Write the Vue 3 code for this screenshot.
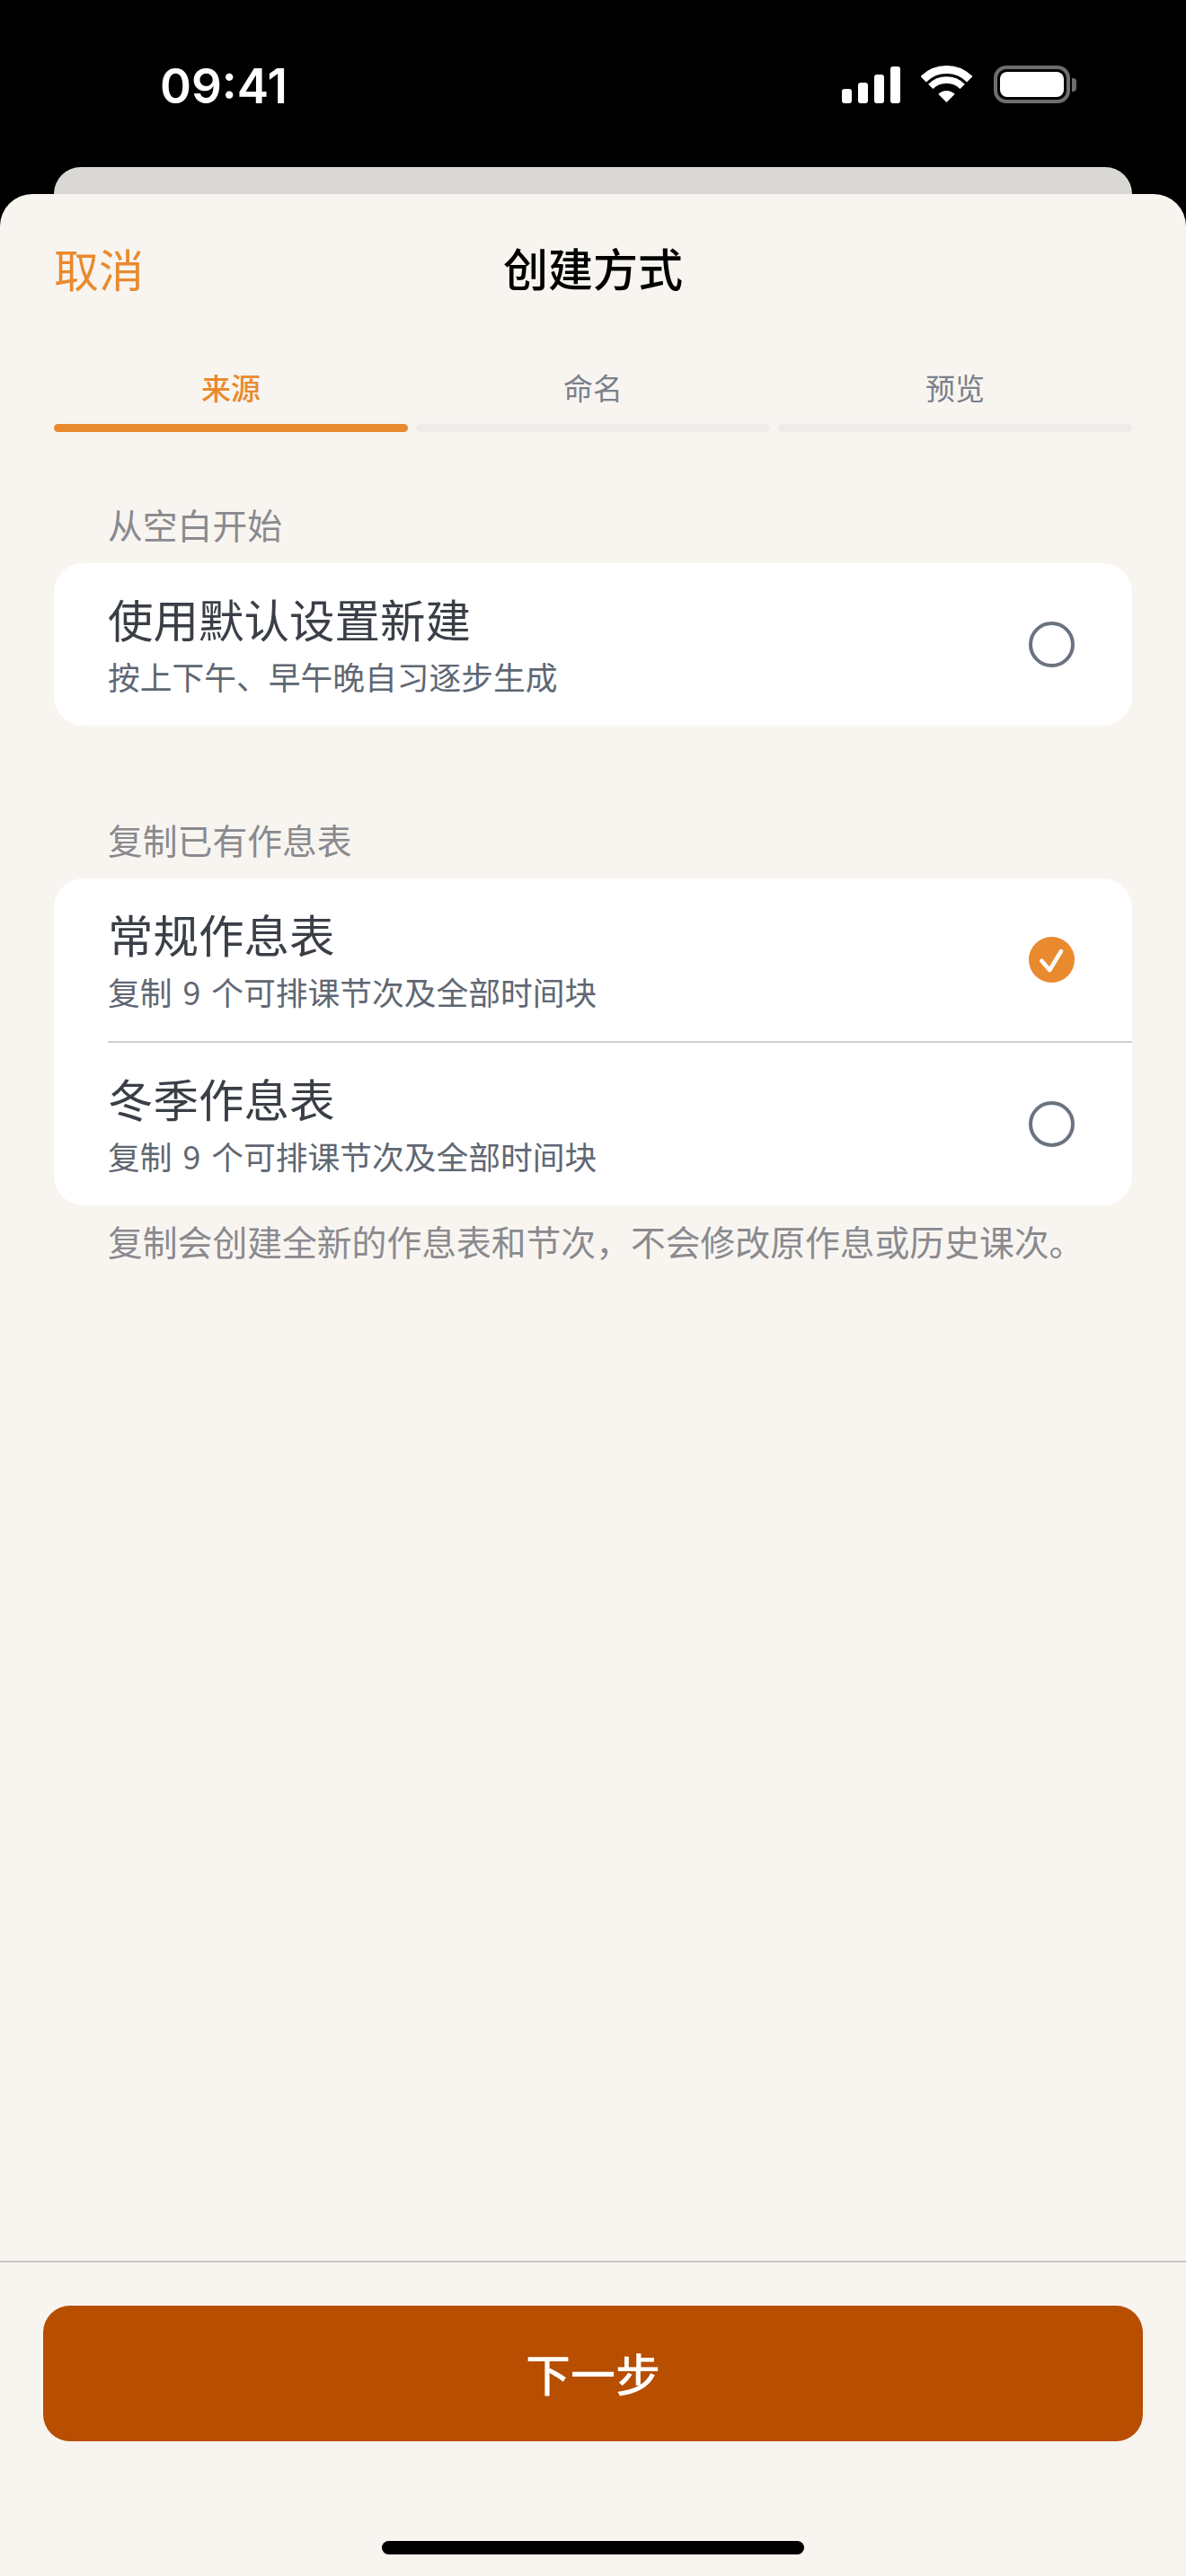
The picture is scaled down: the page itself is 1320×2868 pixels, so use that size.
<script setup>
const tabs = [
  { label: '来源', active: true },
  { label: '命名', active: false },
  { label: '预览', active: false }
]

const copies = [
  { title: '常规作息表', sub: '复制 9 个可排课节次及全部时间块', checked: true },
  { title: '冬季作息表', sub: '复制 9 个可排课节次及全部时间块', checked: false }
]
</script>

<template>
  <div class="phone" lang="zh-CN">
    <div class="status-bar">
      <span class="time">09:41</span>
      <div class="status-icons">
        <div class="signal">
          <i class="b1"></i><i class="b2"></i><i class="b3"></i><i class="b4"></i>
        </div>
        <svg class="wifi" width="57" height="42" viewBox="0 0 57 42" fill="none">
          <path d="M2.7 15.2A36.5 36.5 0 0 1 54.3 15.2" stroke="#fff" stroke-width="9" />
          <path d="M10.8 23.3A25 25 0 0 1 46.2 23.3" stroke="#fff" stroke-width="7.5" />
          <path d="M28.5 41L19.3 31.8A13 13 0 0 1 37.7 31.8Z" fill="#fff" />
        </svg>
        <div class="battery">
          <div class="battery-body"><div class="battery-fill"></div></div>
          <div class="battery-tip"></div>
        </div>
      </div>
    </div>

    <div class="back-card"></div>

    <div class="sheet">
      <div class="content">
        <div class="nav">
          <span class="cancel">取消</span>
          <span class="nav-title">创建方式</span>
          <span></span>
        </div>

        <div class="tabs">
          <div v-for="tab in tabs" :key="tab.label" class="tab" :class="{ active: tab.active }">
            <span class="tab-label">{{ tab.label }}</span>
            <div class="tab-bar"></div>
          </div>
        </div>

        <div class="section-label">从空白开始</div>
        <div class="card">
          <div class="row">
            <div class="row-text">
              <div class="row-title">使用默认设置新建</div>
              <div class="row-sub">按上下午、早午晚自习逐步生成</div>
            </div>
            <div class="radio"></div>
          </div>
        </div>

        <div class="section-label second">复制已有作息表</div>
        <div class="card">
          <div v-for="item in copies" :key="item.title" class="row divided">
            <div class="row-text">
              <div class="row-title">{{ item.title }}</div>
              <div class="row-sub">{{ item.sub }}</div>
            </div>
            <svg v-if="item.checked" class="check" width="51" height="51" viewBox="0 0 51 51" fill="none">
              <circle cx="25.5" cy="25.5" r="25.5" fill="#e98a2e" />
              <path d="M14.3 26.7L23.3 37L36 16" stroke="#fff" stroke-width="4.5" stroke-linecap="round" stroke-linejoin="round" />
            </svg>
            <div v-else class="radio"></div>
          </div>
        </div>
        <div class="note">复制会创建全新的作息表和节次，不会修改原作息或历史课次。</div>
      </div>

      <div class="footer">
        <button class="next-btn">下一步</button>
        <div class="home-indicator"></div>
      </div>
    </div>
  </div>
</template>

<style scoped>
.phone {
  width: 1320px;
  height: 2868px;
  background: #000;
  display: flex;
  flex-direction: column;
  overflow: hidden;
  font-family: "Noto Sans CJK SC", "Noto Sans", sans-serif;
}

.status-bar {
  height: 186px;
  flex-shrink: 0;
  display: flex;
  justify-content: space-between;
  padding: 64px 122px 0 178px;
  box-sizing: border-box;
}

.time {
  font-family: Inter, sans-serif;
  font-size: 53px;
  font-weight: 600;
  line-height: 64px;
  color: #fff;
}

.status-icons {
  display: flex;
  align-items: flex-start;
  padding-top: 9px;
}

.signal {
  display: flex;
  align-items: flex-end;
  gap: 7px;
  height: 42px;
  margin-right: 23px;
}

.signal i {
  display: block;
  width: 11px;
  border-radius: 3px;
  background: #fff;
}
.b1 { height: 16px; }
.b2 { height: 23px; }
.b3 { height: 32px; }
.b4 { height: 41px; }

.wifi {
  margin-right: 24px;
}

.battery {
  display: flex;
  align-items: center;
  gap: 2px;
}

.battery-body {
  width: 85px;
  height: 42px;
  box-sizing: border-box;
  border: 4px solid #6e6e6e;
  border-radius: 14px;
  padding: 3px;
}

.battery-fill {
  height: 100%;
  background: #fff;
  border-radius: 8px;
}

.battery-tip {
  width: 5px;
  height: 15px;
  background: #6e6e6e;
  border-radius: 0 4px 4px 0;
}

.back-card {
  height: 30px;
  flex-shrink: 0;
  margin: 0 60px;
  background: #d9d8d4;
  border-radius: 30px 30px 0 0;
}

.sheet {
  flex: 1;
  display: flex;
  flex-direction: column;
  background: #f8f5f1;
  border-radius: 36px 36px 0 0;
}

.content {
  flex: 1;
  padding: 42px 60px 0;
}

.nav {
  display: grid;
  grid-template-columns: 1fr auto 1fr;
  align-items: center;
  height: 84px;
  margin-bottom: 66px;
}

.cancel {
  font-size: 50px;
  padding-bottom: 4px;
  color: #e98a2e;
}

.nav-title {
  font-size: 50px;
  font-weight: 500;
  padding-bottom: 6px;
  color: #000;
}

.tabs {
  display: flex;
  gap: 9px;
}

.tab {
  flex: 1;
  display: flex;
  flex-direction: column;
  align-items: center;
  gap: 18px;
}

.tab-label {
  font-size: 33px;
  line-height: 46px;
  color: #7b808a;
}

.tab-bar {
  width: 100%;
  height: 9px;
  border-radius: 5px;
  background: #eeebe8;
}

.tab.active .tab-label {
  color: #e98a2e;
  font-weight: 500;
}

.tab.active .tab-bar {
  background: #e98a2e;
}

.section-label {
  margin: 79px 0 21px 60px;
  font-size: 38.8px;
  line-height: 46px;
  color: #8a8a8e;
}

.section-label.second {
  margin-top: 103px;
}

.card {
  background: #fff;
  border-radius: 33px;
  overflow: hidden;
}

.row {
  display: flex;
  align-items: center;
  justify-content: space-between;
  height: 181px;
  box-sizing: border-box;
  margin-left: 60px;
  padding-right: 64px;
}

.row.divided + .row.divided {
  height: 183px;
  border-top: 2px solid #cfcfd2;
}

.row-text {
  padding-bottom: 3px;
}

.row-title {
  font-size: 50.5px;
  line-height: 60px;
  color: #3a3f47;
}

.row-sub {
  margin-top: 13px;
  font-size: 35.75px;
  line-height: 44px;
  word-spacing: 4px;
  color: #5f6773;
}

.radio {
  width: 51px;
  height: 51px;
  box-sizing: border-box;
  border: 4px solid #6b7280;
  border-radius: 50%;
}

.note {
  margin: 12px 0 0 60px;
  font-size: 38.8px;
  line-height: 54px;
  color: #8a8a8e;
}

.footer {
  display: flex;
  flex-direction: column;
  align-items: center;
  padding: 48px 48px 24px;
  border-top: 2px solid #c8c4c2;
}

.next-btn {
  width: 100%;
  height: 151px;
  padding-bottom: 4px;
  border: none;
  border-radius: 30px;
  background: #b84e00;
  color: #fff;
  font-family: inherit;
  font-size: 50px;
  font-weight: 500;
}

.home-indicator {
  width: 470px;
  height: 15px;
  margin-top: 111px;
  border-radius: 8px;
  background: #000;
}
</style>
